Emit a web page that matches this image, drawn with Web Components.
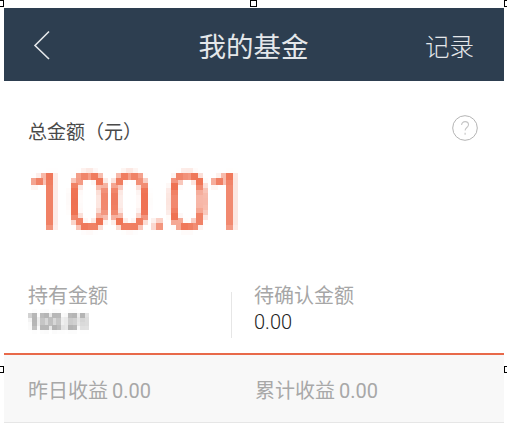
<!DOCTYPE html>
<html lang="zh"><head><meta charset="utf-8"><style>
html,body{margin:0;padding:0;background:#fff;height:426px;overflow:hidden}
body{font-family:Roboto,"Noto Sans CJK SC",sans-serif}
</style></head><body>
<fund-page></fund-page>
<script>
const FONT='Roboto,"Noto Sans CJK SC",sans-serif';
const pix=(id,s)=>`<svg width="0" height="0" style="position:absolute"><filter id="${id}" x="0" y="0" width="100%" height="100%" color-interpolation-filters="sRGB" primitiveUnits="userSpaceOnUse">
<feGaussianBlur in="SourceGraphic" stdDeviation="${s/3}" result="b"/>
<feFlood x="${Math.floor(s/2)}" y="${Math.floor(s/2)}" width="1" height="1" flood-color="#000"/>
<feComposite width="${s}" height="${s}"/><feTile result="t"/>
<feComposite in="b" in2="t" operator="in"/>
<feMorphology operator="dilate" radius="${Math.ceil(s/2)}"/></filter></svg>`;
class FundHeader extends HTMLElement{constructor(){super();this.attachShadow({mode:'open'}).innerHTML=`<style>
:host{display:grid;grid-template-columns:1fr auto 1fr;align-items:center;height:73px;background:#2d3e50;color:#e4e7ea;padding:7px 30px 0 28px;box-sizing:border-box}
.t{font-size:27.5px;line-height:1;margin-left:1px}.r{justify-self:end;font-size:24.5px;line-height:1;font-weight:300}
svg{display:block;margin-top:-7px}
</style><svg width="20" height="30" viewBox="0 0 20 30"><path d="M17 1.500 3 15.500 17 29" fill="none" stroke="#e4e7ea" stroke-width="1.600"/></svg><div class="t"><slot></slot></div><div class="r"><slot name="right"></slot></div>`}}
customElements.define('fund-header',FundHeader);
class FundSummary extends HTMLElement{constructor(){super();this.attachShadow({mode:'open'}).innerHTML=`<style>
:host{display:block;padding:33px 26px 0 24px;height:181px;box-sizing:border-box}
.top{display:flex;justify-content:space-between;align-items:flex-start}
.l{font-size:19px;line-height:36px;color:#4a4a4a;margin-top:1px}
svg.q{display:block;margin-top:1px}
.wrap{margin-top:13px;margin-left:-1px}
.n{display:inline-block;font-size:76px;line-height:76px;font-weight:300;color:#ec5c38;letter-spacing:-1.300px;filter:url(#px5)}
</style>${pix('px5',5)}<div class="top"><div class="l"><slot name="label"></slot></div>
<svg class="q" width="26" height="26" viewBox="0 0 26 26"><circle cx="13" cy="13" r="12.300" fill="none" stroke="#b4b4b4"/><path d="M9.600 10c0-2 1.500-3.400 3.500-3.400s3.400 1.300 3.400 3.100c0 2.800-3.400 2.800-3.400 5.800M13.100 17.700v2" fill="none" stroke="#c4c4c4" stroke-width="1.100"/></svg></div>
<div class="wrap"><span class="n"><slot name="amount"></slot></span></div>`}}
customElements.define('fund-summary',FundSummary);
class FundStat extends HTMLElement{constructor(){super();this.attachShadow({mode:'open'}).innerHTML=`<style>
:host{display:block;font-size:20px;line-height:26px;color:#a6a6a6}
.v{color:#222;font-size:20px;line-height:26px;font-weight:300}
:host([masked]) .v{font-weight:400;color:#5c5c5c;width:max-content;filter:url(#px3)}
</style>${pix('px3',4)}<div><slot></slot></div><div class="v"><slot name="value"></slot></div>`}}
customElements.define('fund-stat',FundStat);
class FundHoldings extends HTMLElement{constructor(){super();this.attachShadow({mode:'open'}).innerHTML=`<style>
:host{display:grid;grid-template-columns:203px 1fr;height:93px;padding:21px 0 0 24px;box-sizing:border-box;border-bottom:2px solid #e8694a}
.b{border-left:1px solid #e6e6e6;padding-left:22px;margin:9px 0 15px}
.b ::slotted(*){margin-top:-9px}
</style><div><slot name="a"></slot></div><div class="b"><slot name="b"></slot></div>`}}
customElements.define('fund-holdings',FundHoldings);
class FundFooter extends HTMLElement{constructor(){super();this.attachShadow({mode:'open'}).innerHTML=`<style>
:host{display:grid;grid-template-columns:227px 1fr;height:67px;align-items:center;padding:0 0 0 24px;background:#f8f8f8;border-bottom:1px solid #e6e6e6;font-size:20px;color:#a8a8a8;line-height:26px}
::slotted(*){display:flex;gap:4px;margin-top:5px}
</style><slot name="a"></slot><slot name="b"></slot>`}}
customElements.define('fund-footer',FundFooter);
class FundPage extends HTMLElement{constructor(){super();this.attachShadow({mode:'open'}).innerHTML=`<style>
:host{display:block;position:relative;width:507px;height:426px;padding:8px 3px 0 4px;box-sizing:border-box;font-family:${FONT}}
i{position:absolute;width:5px;height:5px;border:1px solid #000;background:#fff;box-sizing:content-box}
</style>
<fund-header>我的基金<span slot="right">记录</span></fund-header>
<fund-summary><span slot="label">总金额（元）</span><span slot="amount">100.01</span></fund-summary>
<fund-holdings>
<fund-stat slot="a" masked>持有金额<span slot="value">100.01</span></fund-stat>
<fund-stat slot="b">待确认金额<span slot="value">0.00</span></fund-stat>
</fund-holdings>
<fund-footer><span slot="a"><span>昨日收益</span><span>0.00</span></span><span slot="b"><span>累计收益</span><span>0.00</span></span></fund-footer>
<i style="left:-3px;top:0"></i><i style="left:250px;top:0"></i><i style="left:504px;top:0"></i><i style="left:-3px;top:366px"></i><i style="left:504px;top:366px"></i>`}}
customElements.define('fund-page',FundPage);
</script></body></html>
